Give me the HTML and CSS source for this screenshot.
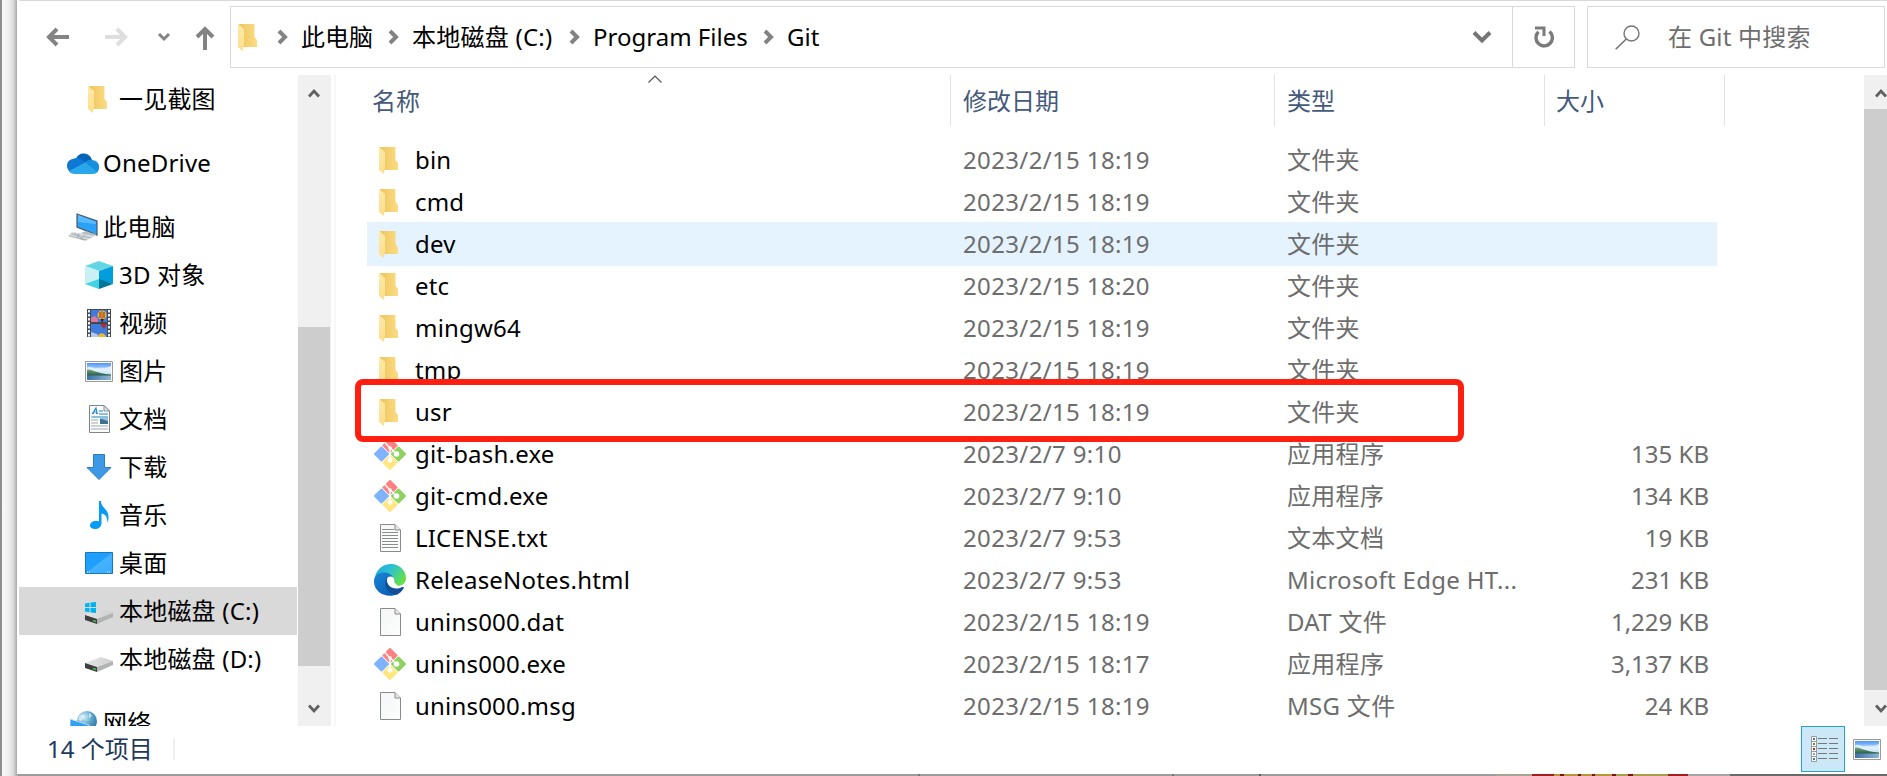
FILE: index.html
```html
<!DOCTYPE html>
<html lang="zh-CN">
<head>
<meta charset="utf-8">
<title>Git</title>
<link rel="stylesheet" href="styles.css">
</head>
<body>
<svg class="defs" width="0" height="0">
  <defs>
    <linearGradient id="gFold" x1="0" x2="1"><stop offset="0" stop-color="#eec55f"/><stop offset="1" stop-color="#fbdc82"/></linearGradient>
    <linearGradient id="gFlap" x1="0" y1="0" x2="0" y2="1"><stop offset="0" stop-color="#ffe9a8"/><stop offset="1" stop-color="#fddf8a"/></linearGradient>
    <linearGradient id="gSky" x1="0" y1="0" x2="0" y2="1"><stop offset="0" stop-color="#4d94f7"/><stop offset=".5" stop-color="#d5ecfb"/><stop offset="1" stop-color="#a9c6d8"/></linearGradient>
    <linearGradient id="gLake" x1="0" y1="0" x2="1" y2="0"><stop offset="0" stop-color="#3f6fa5"/><stop offset="1" stop-color="#8fb8d6"/></linearGradient>
    <linearGradient id="gHill" x1="0" y1="0" x2="0" y2="1"><stop offset="0" stop-color="#7aa37a"/><stop offset="1" stop-color="#1f5a4b"/></linearGradient>
    <linearGradient id="gScreen" x1="0" y1="0" x2="1" y2="1"><stop offset="0" stop-color="#1e9fff"/><stop offset=".48" stop-color="#1e9fff"/><stop offset=".52" stop-color="#46b2ff"/><stop offset="1" stop-color="#3aaaff"/></linearGradient>
    <linearGradient id="gDisk" x1="0" x2="1"><stop offset="0" stop-color="#e6e6e6"/><stop offset="1" stop-color="#cfcfcf"/></linearGradient>
    <linearGradient id="gEdgeTop" x1="0" y1="0" x2="1" y2=".5"><stop offset="0" stop-color="#1fa8e0"/><stop offset=".5" stop-color="#2cc0d2"/><stop offset="1" stop-color="#62e04c"/></linearGradient>
    <linearGradient id="gEdgeLow" x1="0" y1="0" x2=".7" y2="1"><stop offset="0" stop-color="#1b86d4"/><stop offset="1" stop-color="#0a5fb8"/></linearGradient>
    <radialGradient id="gGlobe" cx=".35" cy=".3" r=".8"><stop offset="0" stop-color="#d3eef8"/><stop offset=".5" stop-color="#5aa6cc"/><stop offset="1" stop-color="#2b6f9c"/></radialGradient>
    <linearGradient id="gPage" x1="0" y1="0" x2="1" y2="1"><stop offset="0" stop-color="#f4f6f7"/><stop offset="1" stop-color="#fcfdfd"/></linearGradient>
  </defs>
  <symbol id="folder" viewBox="0 0 19 27"><path d="M1 0H16.500V13L19 16V23H4z" fill="url(#gFold)"/><path d="M0 0L6 5V20L4.800 27L0 23z" fill="url(#gFlap)"/></symbol>
  <symbol id="sep" viewBox="0 0 11 16"><path d="M2 2L8 8L2 14" fill="none" stroke="#838383" stroke-width="4"/></symbol>
  <symbol id="cloud" viewBox="0 0 32 21"><path d="M9 6C11-1 22-2 25 7L17 12z" fill="#0364b8"/><path d="M6 20C-2 18-2 7 6 6C9 4 13 5 15 7L24 13L10 18z" fill="#0f78d4"/><path d="M24 7C30 7 32 10 32 14C32 18 30 21 26 21H8C5 21 3 20 2 18L19 9C20 8 22 7 24 7z" fill="#28a8ea"/><path d="M18.500 9.500C20 7 23 6.500 26 7.500C30 9 32 11 32 14C32 16 31 18 30 19z" fill="#1490df"/></symbol>
  <symbol id="pc" viewBox="0 0 32 28"><path d="M10 1L30 8V22L10 14z" fill="#2ba2f8" stroke="#4b5964" stroke-width="1.200"/><path d="M11 9L29 11V9L11 2z" fill="#5abaff"/><path d="M19 18L24 20L29 21L27 23H17L14 20z" fill="#b7bec4"/><path d="M5 19L28 23L18 28L1 23z" fill="#d8dcdf"/><path d="M4 21L24 25M7 20L17 27M2 23L20 27M12 20L10 25M18 22L14 27" stroke="#9fa8ae" stroke-width=".8"/></symbol>
  <symbol id="cube" viewBox="0 0 28 28"><path d="M14 0L28 5L14 10L0 5z" fill="#63d6e4"/><path d="M0 5L14 10V19L0 23z" fill="#c9f0f2"/><path d="M28 5L14 10V19L28 23z" fill="#009fdc"/><path d="M0 23L14 18V28z" fill="#3fd3e3"/><path d="M28 23L14 18V28z" fill="#007796"/></symbol>
  <symbol id="film" viewBox="0 0 24 28"><path d="M0 0H24V28H0z" fill="#45484c"/><path d="M2 1V28M22 1V28" stroke="#f2f2f2" stroke-width="2" stroke-dasharray="2.500 1.500"/><path d="M4 1H20V13H4zM4 15H20V28H4z" fill="#3d7bdc"/><path d="M4 9L8 7L11 10V13H4z" fill="#e07898"/><path d="M4 23L10 25L12 28H4z" fill="#b7c9ea"/><ellipse cx="15" cy="6" rx="4.500" ry="4.500" fill="#f0b92c"/><path d="M13 3V9M17 3V9" stroke="#6b3232" stroke-width="1"/><path d="M15 2V11" stroke="#d8342c" stroke-width="1"/><path d="M13.500 10L15 14L17 10z" fill="#3a2420"/><path d="M13 15H20L17 20z" fill="#b32c35"/><path d="M11 28C11 23 18 23 19 28z" fill="#f0b92c"/></symbol>
  <symbol id="photo" viewBox="0 0 28 21"><path d="M.5 .5H27.500V20.500H.5z" fill="#fff" stroke="#9a9a9a"/><path d="M2 2H26V19H2z" fill="url(#gSky)"/><path d="M2 7C5 4 8 8 12 7S19 8 26 5V10H2z" fill="#e8f4fd" opacity=".8"/><path d="M2 8.500C7 8 10 12 26 13.500V15H2z" fill="url(#gHill)"/><path d="M2 14.500H26V19H2z" fill="url(#gLake)"/></symbol>
  <symbol id="doc" viewBox="0 0 21 28"><path d="M.5 .5H15L20.500 6V27.500H.5z" fill="#fafbfb" stroke="#7f8488"/><path d="M15 .5V6H20.500z" fill="#e4e6e8" stroke="#8b8f93"/><path d="M3.500 8.500L7 3L8 8.500M5 7H8M3 8.500H5M7 8.500H9M10 6H14M10 9H19M2.500 12H19" fill="none" stroke="#1b87cc" stroke-width="1.100"/><path d="M2 15H9M2 18H9M2 21H19M2 24H19" stroke="#a4a8ab"/><path d="M11 13.500H19V19H11z" fill="#39738e"/><path d="M11 13.500H19V16z" fill="#9cc8ee"/></symbol>
  <symbol id="down" viewBox="0 0 26 26"><path d="M7.500 .5H18.500V13.500H25L13 25.500L1 13.500H7.500z" fill="#3d98e6" stroke="#2b7cc6"/></symbol>
  <symbol id="note" viewBox="0 0 19 28"><path d="M9 0H11C11 7 19 8 18.500 17C18.500 19 18 20 17 21.500C18 16 15 13 11.500 12.500V22C11.500 26 8 28 5 28C2 28 0 26.500 0 24.500C0 21 4 19 9 20.500z" fill="#049cf6"/></symbol>
  <symbol id="desk" viewBox="0 0 28 22"><path d="M.5 .5H27.500V21.500H.5z" fill="url(#gScreen)" stroke="#1878bc"/><path d="M2 20H5M22 20H26" stroke="#e8f6ff" stroke-dasharray="1 1"/></symbol>
  <symbol id="disk" viewBox="0 0 28 15"><path d="M0 6L16 0L28 4L12 10z" fill="url(#gDisk)"/><path d="M0 6L12 10V15L0 11z" fill="#3d3f3f"/><path d="M12 10L28 4V8L12 15z" fill="#b1b3b5"/><path d="M8 11.500L11 12.500" stroke="#49c24d" stroke-width="1.500"/></symbol>
  <symbol id="flag" viewBox="0 0 11 11"><path d="M0 1.500L4.500 .8V5H0zM5.500 .6L11 0V5H5.500zM0 6H4.500V10.200L0 9.500zM5.500 6H11V11L5.500 10.400z" fill="#00b4f0"/></symbol>
  <symbol id="net" viewBox="0 0 27 28"><circle cx="17" cy="10" r="10" fill="url(#gGlobe)"/><path d="M9 5C13 2 16 5 13 8S11 10 8 9zM19 2C23 4 22 6 19 7z" fill="#e3f3f7" opacity=".7"/><path d="M0 8L19 14V27L0 22z" fill="#2ba2f8" stroke="#cfdbe2"/></symbol>
  <symbol id="git" viewBox="0 0 32 32"><path d="M16 1L22.500 7.500L16 14L9.500 7.500z" fill="#ff8080" stroke="#ff8080" stroke-width="2" stroke-linejoin="round"/><path d="M7.500 9.500L14 16L7.500 22.500L1 16z" fill="#80b3ff" stroke="#80b3ff" stroke-width="2" stroke-linejoin="round"/><path d="M24.500 9.500L31 16L24.500 22.500L18 16z" fill="#8dd35f" stroke="#8dd35f" stroke-width="2" stroke-linejoin="round"/><path d="M16 18L22.500 24.500L16 31L9.500 24.500z" fill="#ffe680" stroke="#ffe680" stroke-width="2" stroke-linejoin="round"/><path d="M10.500 4L16 10V22M17 10.500L22 16" fill="none" stroke="#fff" stroke-width="1.500"/><circle cx="16" cy="10" r="1.800" fill="#fff"/><circle cx="16" cy="22" r="2.600" fill="#fff"/><circle cx="22.500" cy="16" r="2.800" fill="#fff"/></symbol>
  <symbol id="edge" viewBox="0 0 32 32"><path d="M1 13C3 4 10 0 17 0C26 0 32 7 32 14C32 19 28 22 23 22C20 22 19 20.500 20 19C22 15 17 9 10 10C5 10 2 12 1 13z" fill="url(#gEdgeTop)"/><path d="M0 16C1 10 6 8 11 8.500C16 9 19 12 20 15C17 11 11 14 12 20C13 28 21 29 24 30C13 35-1 29 0 16z" fill="url(#gEdgeLow)"/><path d="M13 14C8 21 14 31 23 30.500C26 29.500 29 26 30 23.500C30 22.500 28 23 26 24C19 26 12 22 13 14z" fill="#114f9a"/><path d="M20 19C19 21 20 22.500 24 22.500" fill="none" stroke="#fff" stroke-width="1"/><circle cx="16.500" cy="16" r="3.400" fill="#fff"/><path d="M14 17C15 21 19 24 25 23L19 17z" fill="#fff"/></symbol>
  <symbol id="page" viewBox="0 0 21 28"><path d="M.5 .5H15L20.500 6V27.500H.5z" fill="url(#gPage)" stroke="#8a8a8a"/><path d="M15 .5V6H20.500" fill="#e6e6e6" stroke="#8a8a8a"/></symbol>
  <symbol id="txt" viewBox="0 0 21 28"><path d="M.5 .5H15L20.500 6V27.500H.5z" fill="url(#gPage)" stroke="#8a8a8a"/><path d="M15 .5V6H20.500" fill="#e6e6e6" stroke="#8a8a8a"/><path d="M2 5.500H14M2 8.500H18M2 11.500H18M2 14.500H18M2 17.500H18M2 20.500H18M2 23.500H18" stroke="#8c8c8c"/></symbol>
  <symbol id="sup" viewBox="0 0 12 10"><path d="M1 8.500L6 3L11 8.500" fill="none" stroke="#606060" stroke-width="2.800"/></symbol>
</svg>

<div class="desktop">
<div class="window">
  <header class="toolbar">
    <div class="nav">
      <svg class="back" width="24" height="20" viewBox="0 0 24 20"><path d="M23 10H3M11 2L3 10L11 18" fill="none" stroke="#838383" stroke-width="4"/></svg>
      <svg class="fwd" width="24" height="20" viewBox="0 0 24 20"><path d="M1 10H21M13 2L21 10L13 18" fill="none" stroke="#dedede" stroke-width="4"/></svg>
      <svg class="recent" width="14" height="10" viewBox="0 0 14 10"><path d="M2 2L7 7L12 2" fill="none" stroke="#838383" stroke-width="3"/></svg>
      <svg class="up" width="20" height="24" viewBox="0 0 20 24"><path d="M10 24V3M2 11L10 3L18 11" fill="none" stroke="#838383" stroke-width="4"/></svg>
    </div>
    <div class="address">
      <svg class="afolder" width="19" height="27"><use href="#folder"/></svg>
      <svg class="sep s1" width="11" height="16"><use href="#sep"/></svg><span class="crumb c1">此电脑</span>
      <svg class="sep s2" width="11" height="16"><use href="#sep"/></svg><span class="crumb c2">本地磁盘 (C:)</span>
      <svg class="sep s3" width="11" height="16"><use href="#sep"/></svg><span class="crumb c3">Program Files</span>
      <svg class="sep s4" width="11" height="16"><use href="#sep"/></svg><span class="crumb">Git</span>
      <svg class="drop" width="20" height="14" viewBox="0 0 20 14"><path d="M2 2.500L10 10.500L18 2.500" fill="none" stroke="#757575" stroke-width="4"/></svg>
      <span class="refresh"><svg width="20" height="22" viewBox="0 0 20 22"><path d="M15.500 5.500A8.200 8.200 0 1 1 4.500 5.800" fill="none" stroke="#7a7a7a" stroke-width="3.400"/><path d="M1 2H10V10" fill="none" stroke="#7a7a7a" stroke-width="3"/></svg></span>
    </div>
    <div class="search">
      <svg width="25" height="25" viewBox="0 0 25 25"><circle cx="16.500" cy="8.500" r="7.500" fill="none" stroke="#747474" stroke-width="1.400"/><path d="M11.300 14L.7 24.300" stroke="#747474" stroke-width="1.600"/></svg>
      <span>在 Git 中搜索</span>
    </div>
  </header>

  <div class="body">
    <nav class="tree">
      <div class="node child gap"><i><svg class="fo" width="19" height="27"><use href="#folder"/></svg></i>一见截图</div>
      <div class="node gap"><i><svg width="32" height="21"><use href="#cloud"/></svg></i>OneDrive</div>
      <div class="node"><i><svg width="32" height="28"><use href="#pc"/></svg></i>此电脑</div>
      <div class="node child"><i><svg width="28" height="28"><use href="#cube"/></svg></i>3D 对象</div>
      <div class="node child"><i><svg width="24" height="28"><use href="#film"/></svg></i>视频</div>
      <div class="node child"><i><svg width="28" height="21"><use href="#photo"/></svg></i>图片</div>
      <div class="node child"><i><svg width="21" height="28"><use href="#doc"/></svg></i>文档</div>
      <div class="node child"><i><svg width="26" height="26"><use href="#down"/></svg></i>下载</div>
      <div class="node child"><i><svg width="19" height="28"><use href="#note"/></svg></i>音乐</div>
      <div class="node child"><i><svg width="28" height="22"><use href="#desk"/></svg></i>桌面</div>
      <div class="node child selected"><i class="drive"><svg class="flag" width="11" height="11"><use href="#flag"/></svg><svg width="28" height="15"><use href="#disk"/></svg></i>本地磁盘 (C:)</div>
      <div class="node child gap"><i class="drive"><svg width="28" height="15"><use href="#disk"/></svg></i>本地磁盘 (D:)</div>
      <div class="node"><i><svg class="net" width="27" height="28"><use href="#net"/></svg></i>网络</div>
    </nav>
    <div class="scroll">
      <svg width="12" height="10"><use href="#sup"/></svg>
      <div class="thumb"></div>
      <svg class="flip" width="12" height="10"><use href="#sup"/></svg>
    </div>
    <div class="splitter"></div>
    <main class="files">
      <div class="head">
        <div class="h name">名称<svg class="sort" width="14" height="8" viewBox="0 0 14 8"><path d="M.5 7.500L7 1L13.500 7.500" fill="none" stroke="#555" stroke-width="1.200"/></svg></div>
        <div class="h date">修改日期</div><div class="h type">类型</div><div class="h size">大小</div>
      </div>
      <div class="rows">
        <div class="row"><i><svg class="fo" width="19" height="27"><use href="#folder"/></svg></i><span class="n">bin</span><span class="d">2023/2/15 18:19</span><span class="t">文件夹</span><span class="s"></span></div>
        <div class="row"><i><svg class="fo" width="19" height="27"><use href="#folder"/></svg></i><span class="n">cmd</span><span class="d">2023/2/15 18:19</span><span class="t">文件夹</span><span class="s"></span></div>
        <div class="row hover"><i><svg class="fo" width="19" height="27"><use href="#folder"/></svg></i><span class="n">dev</span><span class="d">2023/2/15 18:19</span><span class="t">文件夹</span><span class="s"></span></div>
        <div class="row"><i><svg class="fo" width="19" height="27"><use href="#folder"/></svg></i><span class="n">etc</span><span class="d">2023/2/15 18:20</span><span class="t">文件夹</span><span class="s"></span></div>
        <div class="row"><i><svg class="fo" width="19" height="27"><use href="#folder"/></svg></i><span class="n">mingw64</span><span class="d">2023/2/15 18:19</span><span class="t">文件夹</span><span class="s"></span></div>
        <div class="row"><i><svg class="fo" width="19" height="27"><use href="#folder"/></svg></i><span class="n">tmp</span><span class="d">2023/2/15 18:19</span><span class="t">文件夹</span><span class="s"></span></div>
        <div class="row"><i><svg class="fo" width="19" height="27"><use href="#folder"/></svg></i><span class="n">usr</span><span class="d">2023/2/15 18:19</span><span class="t">文件夹</span><span class="s"></span></div>
        <div class="row"><i><svg width="32" height="32"><use href="#git"/></svg></i><span class="n">git-bash.exe</span><span class="d">2023/2/7 9:10</span><span class="t">应用程序</span><span class="s">135 KB</span></div>
        <div class="row"><i><svg width="32" height="32"><use href="#git"/></svg></i><span class="n">git-cmd.exe</span><span class="d">2023/2/7 9:10</span><span class="t">应用程序</span><span class="s">134 KB</span></div>
        <div class="row"><i><svg width="21" height="28"><use href="#txt"/></svg></i><span class="n">LICENSE.txt</span><span class="d">2023/2/7 9:53</span><span class="t">文本文档</span><span class="s">19 KB</span></div>
        <div class="row"><i><svg width="32" height="32"><use href="#edge"/></svg></i><span class="n">ReleaseNotes.html</span><span class="d">2023/2/7 9:53</span><span class="t">Microsoft Edge HT...</span><span class="s">231 KB</span></div>
        <div class="row"><i><svg width="21" height="28"><use href="#page"/></svg></i><span class="n">unins000.dat</span><span class="d">2023/2/15 18:19</span><span class="t">DAT 文件</span><span class="s">1,229 KB</span></div>
        <div class="row"><i><svg width="32" height="32"><use href="#git"/></svg></i><span class="n">unins000.exe</span><span class="d">2023/2/15 18:17</span><span class="t">应用程序</span><span class="s">3,137 KB</span></div>
        <div class="row"><i><svg width="21" height="28"><use href="#page"/></svg></i><span class="n">unins000.msg</span><span class="d">2023/2/15 18:19</span><span class="t">MSG 文件</span><span class="s">24 KB</span></div>
      </div>
      <div class="marker"></div>
    </main>
    <div class="scroll right">
      <svg width="12" height="10"><use href="#sup"/></svg>
      <div class="thumb"></div>
      <svg class="flip" width="12" height="10"><use href="#sup"/></svg>
    </div>
  </div>

  <footer class="status">
    <span class="count">14 个项目</span>
    <span class="view active"><svg width="28" height="26" viewBox="0 0 28 26"><path d="M.5 .5H5.500V25.500H.5zM.5 5.500H5.500M.5 10.500H5.500M.5 15.500H5.500M.5 20.500H5.500" fill="#fff" stroke="#9a9a9a"/><path d="M2 2H4V4H2zM2 22H4V24H2z" fill="#3c7ca8"/><path d="M2 7H4V9H2z" fill="#6a8a3a"/><path d="M2 12H4V14H2z" fill="#c22a1a"/><path d="M2 17H4V19H2z" fill="#8aa890"/><path d="M7 2.500H16M18 2.500H27M7 7.500H16M18 7.500H27M7 12.500H16M18 12.500H27M7 17.500H16M18 17.500H27M7 22.500H16M18 22.500H27" stroke="#777"/></svg></span>
    <span class="view"><svg width="28" height="21"><use href="#photo"/></svg></span>
  </footer>
</div>
<div class="backdrop"></div>
</div>
</body>
</html>
```

FILE: styles.css
```css
* { box-sizing: border-box; }
body { margin: 0; width: 1887px; height: 776px; overflow: hidden; font: 24px/32px "Noto Sans", "Noto Sans CJK SC", sans-serif; color: #000; }
svg { display: block; flex: none; }
.defs { position: absolute; }
.desktop { height: 776px; padding-left: 17px; background: linear-gradient(90deg, #8e8e8e 0 2px, #fafafa 2px, #f0f0f0 8px, #dcdcdc 13px, #ababab 17px, #ababab 17px); }
.window { height: 774px; background: #fff; display: flex; flex-direction: column; }
.backdrop { height: 2px; margin-left: 1px; background: linear-gradient(90deg, #9f9c9c 0 900px, #777 900px 902px, #9f9c9c 902px 1154px, #777 1154px 1156px, #9f9c9c 1156px 1241px, #5c5c5c 1241px 1243px, #9f9c9c 1243px 1478px, #a8a294 1478px 1514px, #a02020 1514px 1536px, #b4963c 1536px 1542px, #801010 1542px 1546px, #b4963c 1546px 1560px, #801010 1560px 1563px, #b4963c 1563px 1574px, #801010 1574px 1577px, #b4963c 1577px 1594px, #801010 1594px 1598px, #a89c50 1598px 1610px, #801010 1610px 1615px, #a89c50 1615px 1650px, #a02020 1650px 1670px, #a8a4a4 1670px 1712px, #6a6868 1712px); }

.toolbar { height: 75px; flex: none; display: flex; align-items: flex-start; margin-left: 2px; padding-top: 5px; border-top: 1px solid #d9d9d9; }
.nav { width: 211px; height: 62px; display: flex; align-items: center; flex: none; }
.back { margin-left: 27px; }
.fwd { margin-left: 34px; }
.recent { margin-left: 29px; }
.up { margin-left: 24px; margin-top: 2px; }
.address { width: 1345px; height: 62px; border: 1px solid #d9d9d9; display: flex; align-items: center; flex: none; white-space: nowrap; }
.afolder { margin-left: 7px; }
.s1 { margin: 0 13px 0 20px; }
.c1 { width: 87px; }
.s2 { margin-right: 13px; }
.c2 { width: 157px; letter-spacing: .25px; }
.s3 { margin-right: 13px; }
.c3 { width: 170px; }
.s4 { margin-right: 13px; }
.crumb { flex: none; }
.drop { margin-left: auto; margin-right: 20px; }
.refresh { width: 62px; height: 60px; border-left: 1px solid #d9d9d9; display: flex; align-items: center; justify-content: center; }
.search { width: 298px; height: 62px; margin-left: 12px; border: 1px solid #d9d9d9; display: flex; align-items: center; padding-left: 27px; gap: 28px; color: #6d6d6d; white-space: nowrap; letter-spacing: .2px; }

.body { height: 651px; flex: none; display: flex; }
.tree { width: 281px; height: 651px; overflow: hidden; padding: 0 1px 0 2px; flex: none; white-space: nowrap; letter-spacing: .2px; }
.node { height: 48px; display: flex; align-items: center; padding-left: 48px; }
.node i { width: 32px; margin-right: 4px; display: flex; justify-content: center; font-style: normal; }
.node.child { padding-left: 64px; }
.node.gap { margin-bottom: 16px; }
.node.selected { background: #d9d9d9; }
.node i .fo { margin-right: 3px; }
.node i .net { margin-top: 4px; }
.node i.drive { flex-direction: column; align-items: center; padding-top: 10px; }
.selected i.drive { padding-top: 4px; }
.flag { margin: 0 17px -4px 0; z-index: 1; }

.scroll { width: 33px; background: #f0f0f0; flex: none; display: flex; flex-direction: column; align-items: center; padding: 13px 1px 12px 0; }
.scroll .thumb { width: 32px; height: 339px; background: #cdcdcd; margin: 229px 0 auto 0; }
.scroll .flip { transform: scaleY(-1); }
.splitter { width: 2px; margin-left: 3px; background: #f7f7f7; flex: none; }
.scroll.right { margin-left: auto; width: 23px; align-items: flex-end; padding-right: 0; }
.scroll.right .thumb { width: 23px; height: 581px; margin: 11px 0 auto 0; }

.files { position: relative; width: 1528px; padding-left: 14px; }
.head { display: flex; height: 51px; color: #44597b; margin-left: -14px; }
.h { border-right: 1px solid #e2e2e2; padding: 10px 0 0 12px; position: relative; }
.h.name { width: 615px; padding-left: 36px; }
.h.date { width: 324px; }
.h.type { width: 270px; }
.h.size { width: 180px; padding-left: 11px; }
.sort { position: absolute; left: 312px; top: 0; }
.rows { padding: 12px 0 0 17px; width: 1367px; display: flex; flex-direction: column; }
.row { height: 44px; margin-bottom: -2px; display: flex; align-items: center; padding: 0 8px 0 7px; white-space: nowrap; }
.row.hover { background: #e5f3ff; }
.row i { width: 32px; flex: none; display: flex; justify-content: center; }
.row i .fo { margin-right: 3px; }
.n { width: 557px; padding-left: 9px; flex: none; letter-spacing: .2px; }
.d, .t, .s { color: #6d6d6d; }
.d { width: 324px; flex: none; letter-spacing: .36px; }
.t { width: 250px; flex: none; letter-spacing: .3px; }
.s { flex: 1; text-align: right; }
.marker { position: absolute; left: 19px; top: 304px; width: 1109px; height: 63px; border: 6px solid #ff1f10; border-radius: 8px; }

.status { height: 48px; display: flex; align-items: flex-start; padding-left: 30px; color: #1e395b; }
.count { width: 128px; height: 22px; margin-top: 12px; line-height: 22px; border-right: 2px solid #f0f0f0; white-space: nowrap; }
.view { height: 46px; width: 44px; display: flex; align-items: center; justify-content: center; }
.view.active { margin-left: auto; padding-left: 3px; border: 1px solid #26a0da; background: #cce8f6; }
.view:last-child { width: 42px; padding-left: 2px; }
```
